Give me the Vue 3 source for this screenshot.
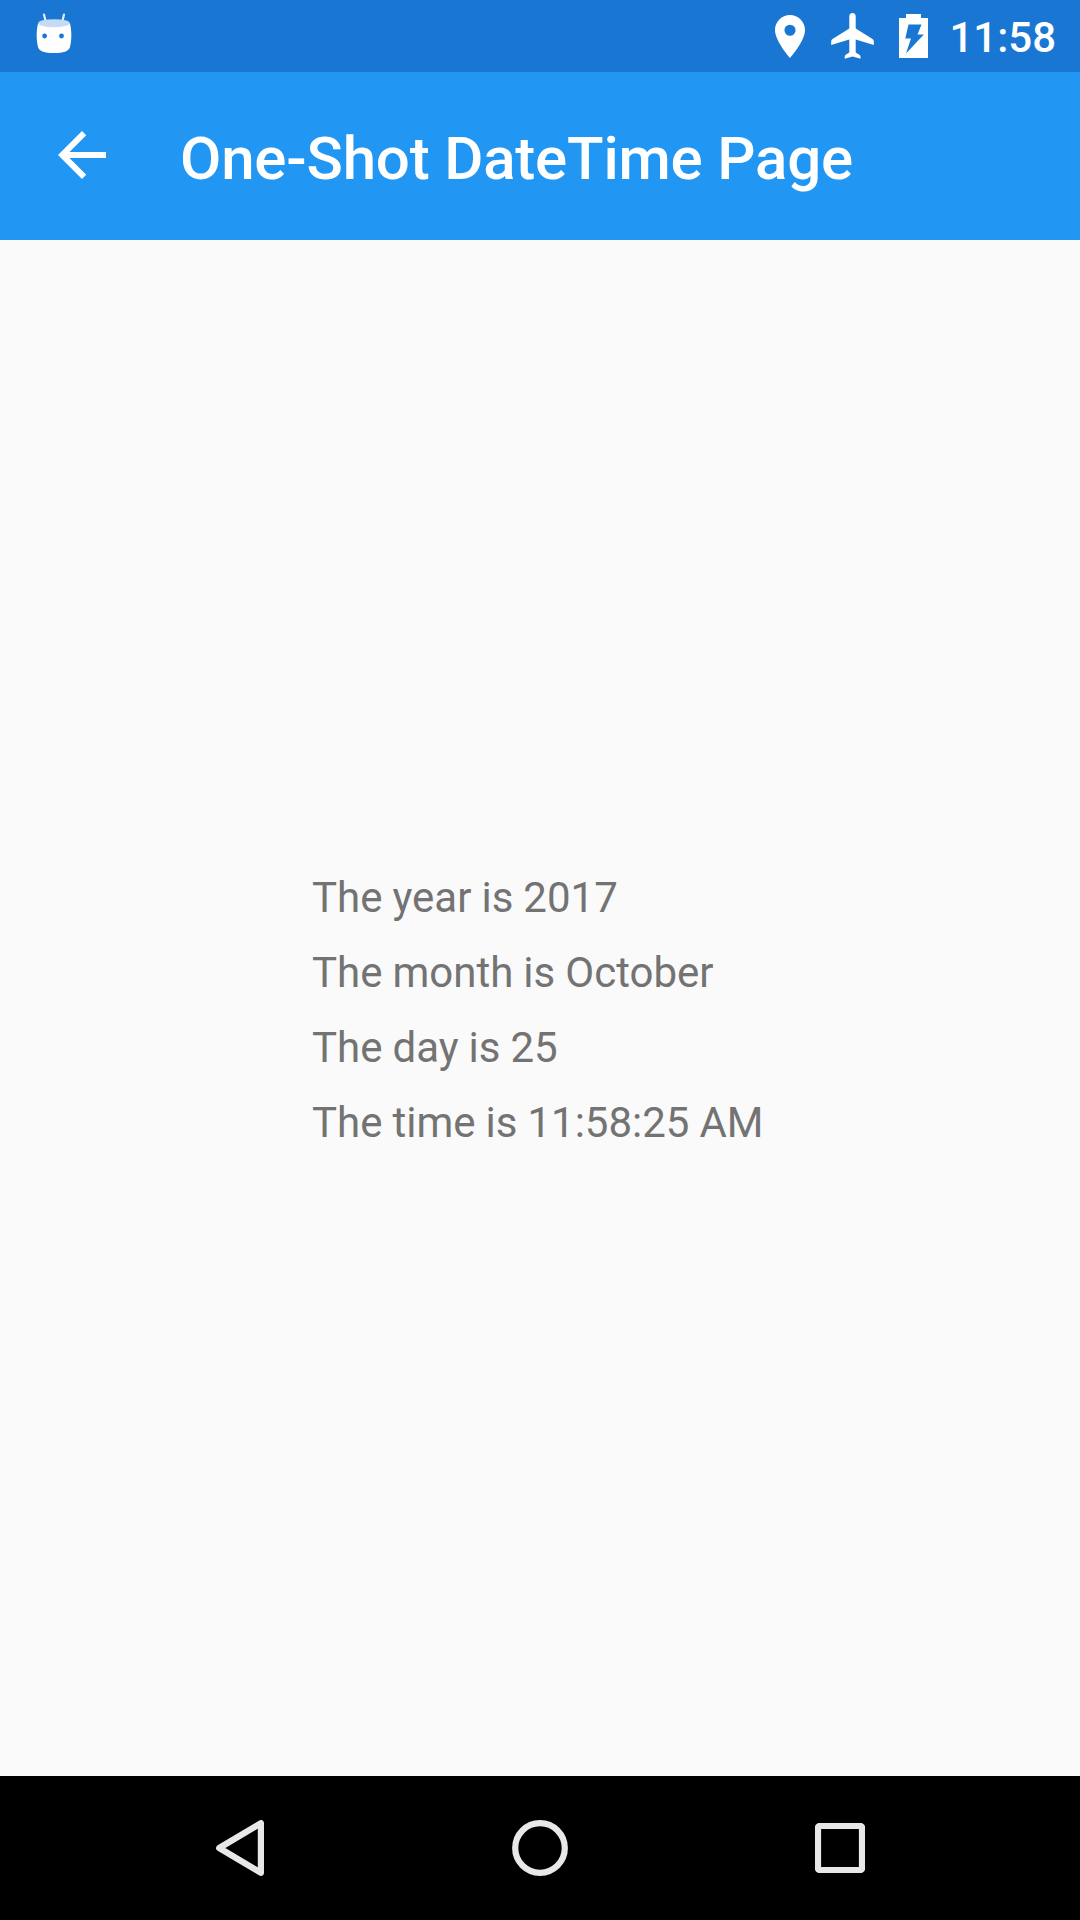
<script setup>
const lines = [
  'The year is 2017',
  'The month is October',
  'The day is 25',
  'The time is 11:58:25 AM',
]
</script>

<template>
  <div class="screen">
    <header class="status">
      <svg class="robot" width="36" height="42" viewBox="0 0 36 42">
        <path d="M8 1.500l2 8.500M28 1.500l-2 8.500" stroke="#e4edf9" stroke-width="2.200" stroke-linecap="round" />
        <path d="M2 10.500C0 19 .4 28 2.200 34.500 4 38.500 8 40 18 40s14-1.500 15.800-5.500C35.600 28 36 19 34 10.500z" fill="#fff" />
        <ellipse cx="18" cy="10.200" rx="15.800" ry="4" fill="#c5daf3" />
        <circle cx="8.600" cy="23" r="2.400" fill="#1976d2" />
        <circle cx="25.500" cy="23" r="2.400" fill="#1976d2" />
      </svg>
      <div class="indicators">
        <svg class="pin" width="30" height="43" viewBox="5 2 14 20" preserveAspectRatio="none">
          <path fill="#fff" d="M12 2C8.130 2 5 5.130 5 9c0 5.250 7 13 7 13s7-7.750 7-13c0-3.870-3.130-7-7-7zm0 9.700a2.600 2.600 0 1 1 0-5.200 2.600 2.600 0 0 1 0 5.200z" />
        </svg>
        <svg class="plane" width="43" height="46" viewBox="0 0 43 46">
          <path fill="#fff" d="M18.300 3.500a3.200 3.500 0 0 1 6.400 0V15.500L41.500 26q1.300.8 1.300 2.300V32L24.700 26.500V39.500L28 41.500q1.500.8 1.500 2V45.700L21.500 43.500 13.700 45.700V43.500q0-1.200 1.300-2L18.300 39.500V26.500L.2 32V28.300Q.2 26.800 1.500 26L18.300 15.500z" />
        </svg>
        <svg class="battery" width="29" height="44" viewBox="0 0 29 44">
          <path fill="#fff" d="M7 0h15v4h7v40H0V4h7z" />
          <path fill="#1976d2" d="M9.500 10.500h13L18.500 20.500h6.300L7 39.500 12 24.500H6.300z" />
        </svg>
        <span class="clock">11:58</span>
      </div>
    </header>
    <div class="toolbar">
      <svg class="back" width="48" height="48" viewBox="4 4 16 16">
        <path fill="#fff" d="M20 11H7.830l5.590-5.590L12 4l-8 8 8 8 1.410-1.410L7.830 13H20v-2z" />
      </svg>
      <h1 class="title">One-Shot DateTime Page</h1>
    </div>
    <main class="content">
      <div class="lines">
        <p v-for="line in lines" :key="line">{{ line }}</p>
      </div>
    </main>
    <nav class="nav">
      <svg width="48" height="56" viewBox="0 0 48 56">
        <path d="M44.900 3.200V52.800L3.200 28z" />
      </svg>
      <svg width="56" height="56" viewBox="0 0 56 56">
        <circle cx="28" cy="28" r="24.800" />
      </svg>
      <svg width="50" height="50" viewBox="0 0 50 50">
        <rect x="3" y="3" width="44" height="44" rx="1.500" />
      </svg>
    </nav>
  </div>
</template>

<style>
body {
  margin: 0;
}
</style>

<style scoped>
.screen {
  display: flex;
  flex-direction: column;
  width: 1080px;
  height: 1920px;
  overflow: hidden;
  background: #fafafa;
  font-family: Roboto, "Liberation Sans", sans-serif;
}
.screen svg {
  display: block;
  flex: none;
}
.status {
  display: flex;
  justify-content: space-between;
  align-items: flex-start;
  box-sizing: border-box;
  height: 72px;
  padding: 0 24px 0 36px;
  background: #1976d2;
}
.robot {
  margin-top: 13px;
}
.indicators {
  display: flex;
  align-items: flex-start;
}
.pin {
  margin-top: 15px;
}
.plane {
  margin: 13px 25px 0 26px;
}
.battery {
  margin-top: 14px;
}
.clock {
  margin-left: 21px;
  color: #fff;
  font-size: 42px;
  font-weight: 500;
  line-height: 75px;
}
.toolbar {
  display: flex;
  align-items: flex-start;
  height: 168px;
  background: #2196f3;
}
.back {
  margin: 59px 0 0 58px;
}
.title {
  margin: 3px 0 0 74px;
  color: #fff;
  font-size: 60px;
  font-weight: 500;
  line-height: 168px;
  letter-spacing: -0.19px;
  white-space: nowrap;
}
.content {
  flex: 1;
  display: flex;
  justify-content: center;
  align-items: center;
}
.lines {
  width: 456px;
  padding-top: 4px;
  color: #737373;
  font-size: 42px;
  line-height: 75px;
  word-spacing: -0.4px;
  white-space: nowrap;
}
.lines p {
  margin: 0;
}
.nav {
  display: flex;
  justify-content: space-between;
  align-items: center;
  box-sizing: border-box;
  height: 144px;
  padding: 0 215px 0 216px;
  background: #000;
}
.nav svg {
  fill: none;
  stroke: #e8e8e8;
  stroke-width: 6.2;
  stroke-linejoin: round;
}
</style>
